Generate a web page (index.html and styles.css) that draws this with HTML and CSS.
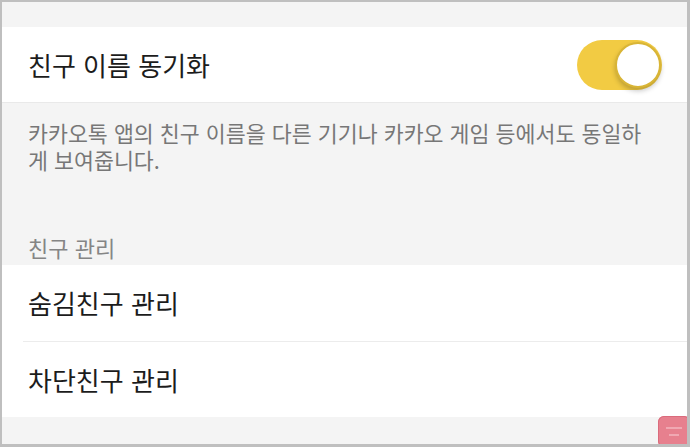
FILE: index.html
```html
<!DOCTYPE html>
<html lang="ko">
<head>
    <meta charset="UTF-8">
    <meta name="viewport" content="width=device-width, initial-scale=1.0">
    <title>친구 설정</title>
    <link rel="stylesheet" href="styles.css">
</head>
<body>
    <div class="frame">
        <div class="spacer-top"></div>

        <div class="row row-toggle">
            <span class="row-label">친구 이름 동기화</span>
            <div class="switch">
                <div class="switch-knob"></div>
            </div>
        </div>

        <p class="desc">카카오톡 앱의 친구 이름을 다른 기기나 카카오 게임 등에서도 동일하게 보여줍니다.</p>

        <div class="section-title">친구 관리</div>

        <div class="group">
            <div class="row">
                <span class="row-label">숨김친구 관리</span>
            </div>
            <div class="row row-last">
                <span class="row-label">차단친구 관리</span>
            </div>
        </div>

        <div class="badge">
            <span class="badge-line"></span>
            <span class="badge-line short"></span>
        </div>
    </div>
</body>
</html>
```

FILE: styles.css
```css
html, body {
    margin: 0;
    padding: 0;
}

body {
    font-family: "Noto Sans CJK KR", "Noto Sans", sans-serif;
    background-color: #ffffff;
}

.frame {
    position: relative;
    box-sizing: border-box;
    width: 690px;
    height: 447px;
    background-color: #f4f4f4;
    border-style: solid;
    border-color: #bfbfbf;
    border-width: 2px 3px 3px 2px;
    overflow: hidden;
}

.spacer-top {
    height: 25px;
}

.row {
    display: flex;
    align-items: center;
    justify-content: space-between;
    height: 76px;
    padding: 0 25px 0 26px;
    background-color: #ffffff;
    position: relative;
}

.row-label {
    font-size: 26px;
    color: #1c1c1c;
    line-height: 1;
}

.row-toggle {
    height: 75px;
    border-bottom: 1px solid #e9e9e9;
}

.switch {
    width: 85px;
    height: 50px;
    border-radius: 25px;
    background-color: #f2cb43;
    display: flex;
    align-items: center;
    justify-content: flex-end;
    box-sizing: border-box;
    padding-right: 1px;
}

.switch-knob {
    width: 46px;
    height: 46px;
    border-radius: 50%;
    background-color: #ffffff;
    box-sizing: border-box;
    border: 2px solid #d9b536;
    box-shadow: 0 3px 5px rgba(0, 0, 0, 0.22);
}

.desc {
    margin: 0;
    padding: 16px 36px 0 26px;
    font-size: 21.7px;
    line-height: 27px;
    color: #777777;
}

.section-title {
    margin-top: 61px;
    padding: 0 26px;
    font-size: 22px;
    line-height: 26px;
    color: #858585;
    height: 31px;
}

.group {
    background-color: #ffffff;
}

.group .row {
    border-bottom: 1px solid #ececec;
    margin-left: 21px;
    padding-left: 5px;
}

.group .row-last {
    border-bottom: none;
    height: 75px;
}

.badge {
    position: absolute;
    right: -3px;
    bottom: -3px;
    width: 32px;
    height: 31px;
    border-radius: 6px;
    background-color: #e7808e;
    box-shadow: inset 0 0 0 1px #da6b7c;
    display: flex;
    flex-direction: column;
    align-items: center;
    justify-content: center;
    gap: 5px;
}

.badge-line {
    width: 16px;
    height: 2px;
    background-color: #f0a8b2;
}

.badge-line.short {
    width: 10px;
}
```
